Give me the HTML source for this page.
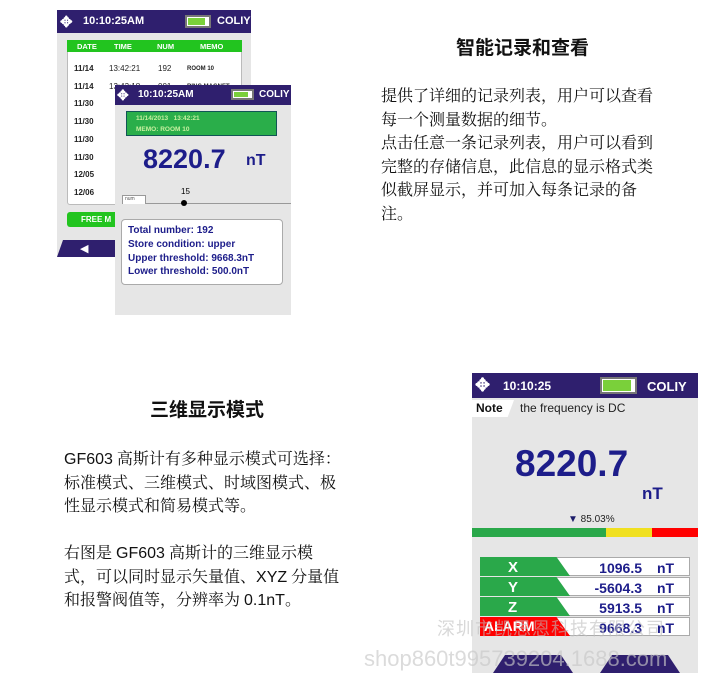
<!DOCTYPE html>
<html><head><meta charset="utf-8"><style>
*{margin:0;padding:0;box-sizing:border-box}
body{width:707px;height:687px;background:#fff;position:relative;overflow:hidden;font-family:"Liberation Sans",sans-serif}
.a{position:absolute}
.hd{background:#2f1f6e;color:#fff;font-weight:bold}
.cn{font-family:"Liberation Serif","Noto Serif CJK SC",serif;font-size:16px;line-height:23.5px;color:#111}
.tt{font-family:"Liberation Sans","Noto Sans CJK SC",sans-serif;font-weight:bold;font-size:19px;color:#111}
.bat{position:absolute;border:2px solid #777;background:#fff;}
.bat i{position:absolute;left:1px;top:1px;bottom:1px;right:4px;background:#7ad03a}
.blue{color:#1d1d8a}
</style></head><body>

<!-- screen 1 -->
<div class="a" style="left:57px;top:10px;width:194px;height:247px;background:#e6e6e6"></div>
<div class="a hd" style="left:57px;top:10px;width:194px;height:23px;font-size:11px">
 <span class="a" style="left:3px;top:3px;font-size:15px">✥</span>
 <span class="a" style="left:26px;top:5px">10:10:25AM</span>
 <div class="bat" style="left:128px;top:5px;width:26px;height:13px"><i></i></div>
 <span class="a" style="left:160px;top:5px;font-size:11px">COLIY</span>
</div>
<div class="a" style="left:67px;top:40px;width:175px;height:165px;background:#fff;border:1px solid #bbb;border-radius:3px"></div>
<div class="a" style="left:67px;top:40px;width:175px;height:12px;background:#22c41f;color:#fff;font-size:7.5px;font-weight:bold">
 <span class="a" style="left:10px;top:2px">DATE</span><span class="a" style="left:47px;top:2px">TIME</span><span class="a" style="left:90px;top:2px">NUM</span><span class="a" style="left:133px;top:2px">MEMO</span>
</div>
<div class="a" style="left:74px;top:60px;font-size:8px;font-weight:bold;color:#222;line-height:17.7px">11/14<br>11/14<br>11/30<br>11/30<br>11/30<br>11/30<br>12/05<br>12/06</div>
<div class="a" style="left:109px;top:60px;font-size:8px;color:#222;line-height:17.7px">13:42:21<br>13:43:18</div>
<div class="a" style="left:158px;top:60px;font-size:8px;color:#222;line-height:17.7px">192<br>001</div>
<div class="a" style="left:187px;top:61px;font-size:6px;font-weight:bold;color:#222;line-height:17.7px">ROOM 10<br>RING MAGNET</div>
<div class="a" style="left:67px;top:212px;width:60px;height:15px;background:#22c41f;border-radius:3px;color:#fff;font-size:8px;font-weight:bold;padding:3px 0 0 14px">FREE M</div>
<div class="a" style="left:57px;top:240px;width:60px;height:17px;background:#2f1f6e;clip-path:polygon(10% 0,100% 0,100% 100%,0 100%)"></div>
<div class="a" style="left:80px;top:242px;color:#fff;font-size:11px">◀</div>

<!-- screen 2 -->
<div class="a" style="left:115px;top:85px;width:176px;height:230px;background:#e6e6e6"></div>
<div class="a hd" style="left:115px;top:85px;width:176px;height:20px;font-size:10px">
 <span class="a" style="left:2px;top:2px;font-size:14px">✥</span>
 <span class="a" style="left:23px;top:4px">10:10:25AM</span>
 <div class="bat" style="left:116px;top:4px;width:23px;height:11px"><i></i></div>
 <span class="a" style="left:144px;top:4px">COLIY</span>
</div>
<div class="a" style="left:126px;top:111px;width:151px;height:25px;background:#2aae4a;border:1px solid #155;color:#c8f0a0;font-size:6.5px;font-weight:bold;line-height:11px;padding:1px 0 0 9px">11/14/2013 &nbsp; 13:42:21<br>MEMO: ROOM 10</div>
<div class="a blue" style="left:143px;top:144px;font-size:27px;font-weight:bold">8220.7</div>
<div class="a blue" style="left:246px;top:152px;font-size:16px;font-weight:bold">nT</div>
<div class="a" style="left:181px;top:187px;font-size:8px">15</div>
<div class="a" style="left:122px;top:203px;width:169px;height:1px;background:#999"></div>
<div class="a" style="left:122px;top:195px;width:24px;height:9px;background:#fff;border:1px solid #999;border-bottom:none;font-size:5px;color:#555;padding-left:2px">num</div>
<div class="a" style="left:181px;top:200px;width:6px;height:6px;border-radius:50%;background:#000"></div>
<div class="a blue" style="left:121px;top:219px;width:162px;height:66px;background:#fff;border:1px solid #aaa;border-radius:4px;font-size:10px;font-weight:bold;line-height:13.8px;padding:4px 0 0 6px">Total number: 192<br>Store condition: upper<br>Upper threshold: 9668.3nT<br>Lower threshold: 500.0nT</div>

<!-- right text 1 -->
<div class="a tt" style="left:456px;top:33px">智能记录和查看</div>
<div class="a cn" style="left:381px;top:85px;width:310px">提供了详细的记录列表，用户可以查看<br>每一个测量数据的细节。<br>点击任意一条记录列表，用户可以看到<br>完整的存储信息，此信息的显示格式类<br>似截屏显示，并可加入每条记录的备<br>注。</div>

<!-- left text 2 -->
<div class="a tt" style="left:150px;top:395px">三维显示模式</div>
<div class="a cn" style="left:64px;top:448px;width:320px"><span style="font-family:'Liberation Sans'">GF603</span> 高斯计有多种显示模式可选择：<br>标准模式、三维模式、时域图模式、极<br>性显示模式和简易模式等。<br><br>右图是 <span style="font-family:'Liberation Sans'">GF603</span> 高斯计的三维显示模<br>式，可以同时显示矢量值、<span style="font-family:'Liberation Sans'">XYZ</span> 分量值<br>和报警阀值等，分辨率为 <span style="font-family:'Liberation Sans'">0.1nT</span>。</div>

<!-- screen 3 -->
<div class="a" style="left:472px;top:373px;width:226px;height:300px;background:#e6e6e6"></div>
<div class="a hd" style="left:472px;top:373px;width:226px;height:25px;font-size:12px">
 <span class="a" style="left:3px;top:2px;font-size:18px">✥</span>
 <span class="a" style="left:31px;top:6px">10:10:25</span>
 <div class="bat" style="left:128px;top:4px;width:37px;height:17px"><i></i></div>
 <span class="a" style="left:175px;top:6px;font-size:13px">COLIY</span>
</div>
<div class="a" style="left:472px;top:400px;width:42px;height:17px;background:#fff;clip-path:polygon(0 0,100% 0,85% 100%,0 100%);font-size:12px;font-weight:bold;padding:1px 0 0 4px;color:#111">Note</div>
<div class="a" style="left:520px;top:401px;font-size:12px;color:#222">the frequency is DC</div>
<div class="a blue" style="left:515px;top:443px;font-size:37px;font-weight:bold">8220.7</div>
<div class="a blue" style="left:642px;top:484px;font-size:17px;font-weight:bold">nT</div>
<div class="a" style="left:568px;top:514px;font-size:10px;color:#222"><span style="color:#1d1d6a">▼</span> 85.03%</div>
<div class="a" style="left:472px;top:528px;width:134px;height:9px;background:#2aa84a"></div>
<div class="a" style="left:606px;top:528px;width:46px;height:9px;background:#f0e020"></div>
<div class="a" style="left:652px;top:528px;width:46px;height:9px;background:#f00"></div>

<div class="a" style="left:480px;top:557px;width:210px;height:80px">
 <div class="a" style="left:0;top:0;width:210px;height:19px;background:#fff;border:1px solid #aaa"></div>
 <div class="a" style="left:0;top:20px;width:210px;height:19px;background:#fff;border:1px solid #aaa"></div>
 <div class="a" style="left:0;top:40px;width:210px;height:19px;background:#fff;border:1px solid #aaa"></div>
 <div class="a" style="left:0;top:60px;width:210px;height:19px;background:#fff;border:1px solid #aaa"></div>
 <div class="a" style="left:0;top:0;width:90px;height:19px;background:#2aa84a;clip-path:polygon(0 0,85% 0,100% 100%,0 100%)"></div>
 <div class="a" style="left:0;top:20px;width:90px;height:19px;background:#2aa84a;clip-path:polygon(0 0,85% 0,100% 100%,0 100%)"></div>
 <div class="a" style="left:0;top:40px;width:90px;height:19px;background:#2aa84a;clip-path:polygon(0 0,85% 0,100% 100%,0 100%)"></div>
 <div class="a" style="left:0;top:60px;width:90px;height:19px;background:#f00;clip-path:polygon(0 0,85% 0,100% 100%,0 100%)"></div>
 <div class="a" style="left:28px;top:1px;color:#fff;font-weight:bold;font-size:15px;line-height:20px">X<br>Y<br>Z</div>
 <div class="a" style="left:4px;top:61px;color:#fff;font-weight:bold;font-size:14px">ALARM</div>
 <div class="a blue" style="left:92px;top:1px;width:70px;text-align:right;font-weight:bold;font-size:14px;line-height:20px">1096.5<br>-5604.3<br>5913.5<br>9668.3</div>
 <div class="a blue" style="left:177px;top:1px;font-weight:bold;font-size:14px;line-height:20px">nT<br>nT<br>nT<br>nT</div>
</div>
<div class="a" style="left:493px;top:655px;width:80px;height:18px;background:#2f1f6e;clip-path:polygon(15% 0,85% 0,100% 100%,0 100%)"></div>
<div class="a" style="left:600px;top:655px;width:80px;height:18px;background:#2f1f6e;clip-path:polygon(15% 0,85% 0,100% 100%,0 100%)"></div>

<!-- watermark -->
<div class="a" style="left:437px;top:615px;font-family:'Liberation Sans','Noto Sans CJK SC',sans-serif;font-size:18px;color:rgba(190,190,190,0.6);letter-spacing:1px">深圳市凯思恩科技有限公司</div>
<div class="a" style="left:364px;top:646px;font-size:22px;color:rgba(200,200,200,0.65)">shop860t995739204.1688.com</div>
</body></html>
